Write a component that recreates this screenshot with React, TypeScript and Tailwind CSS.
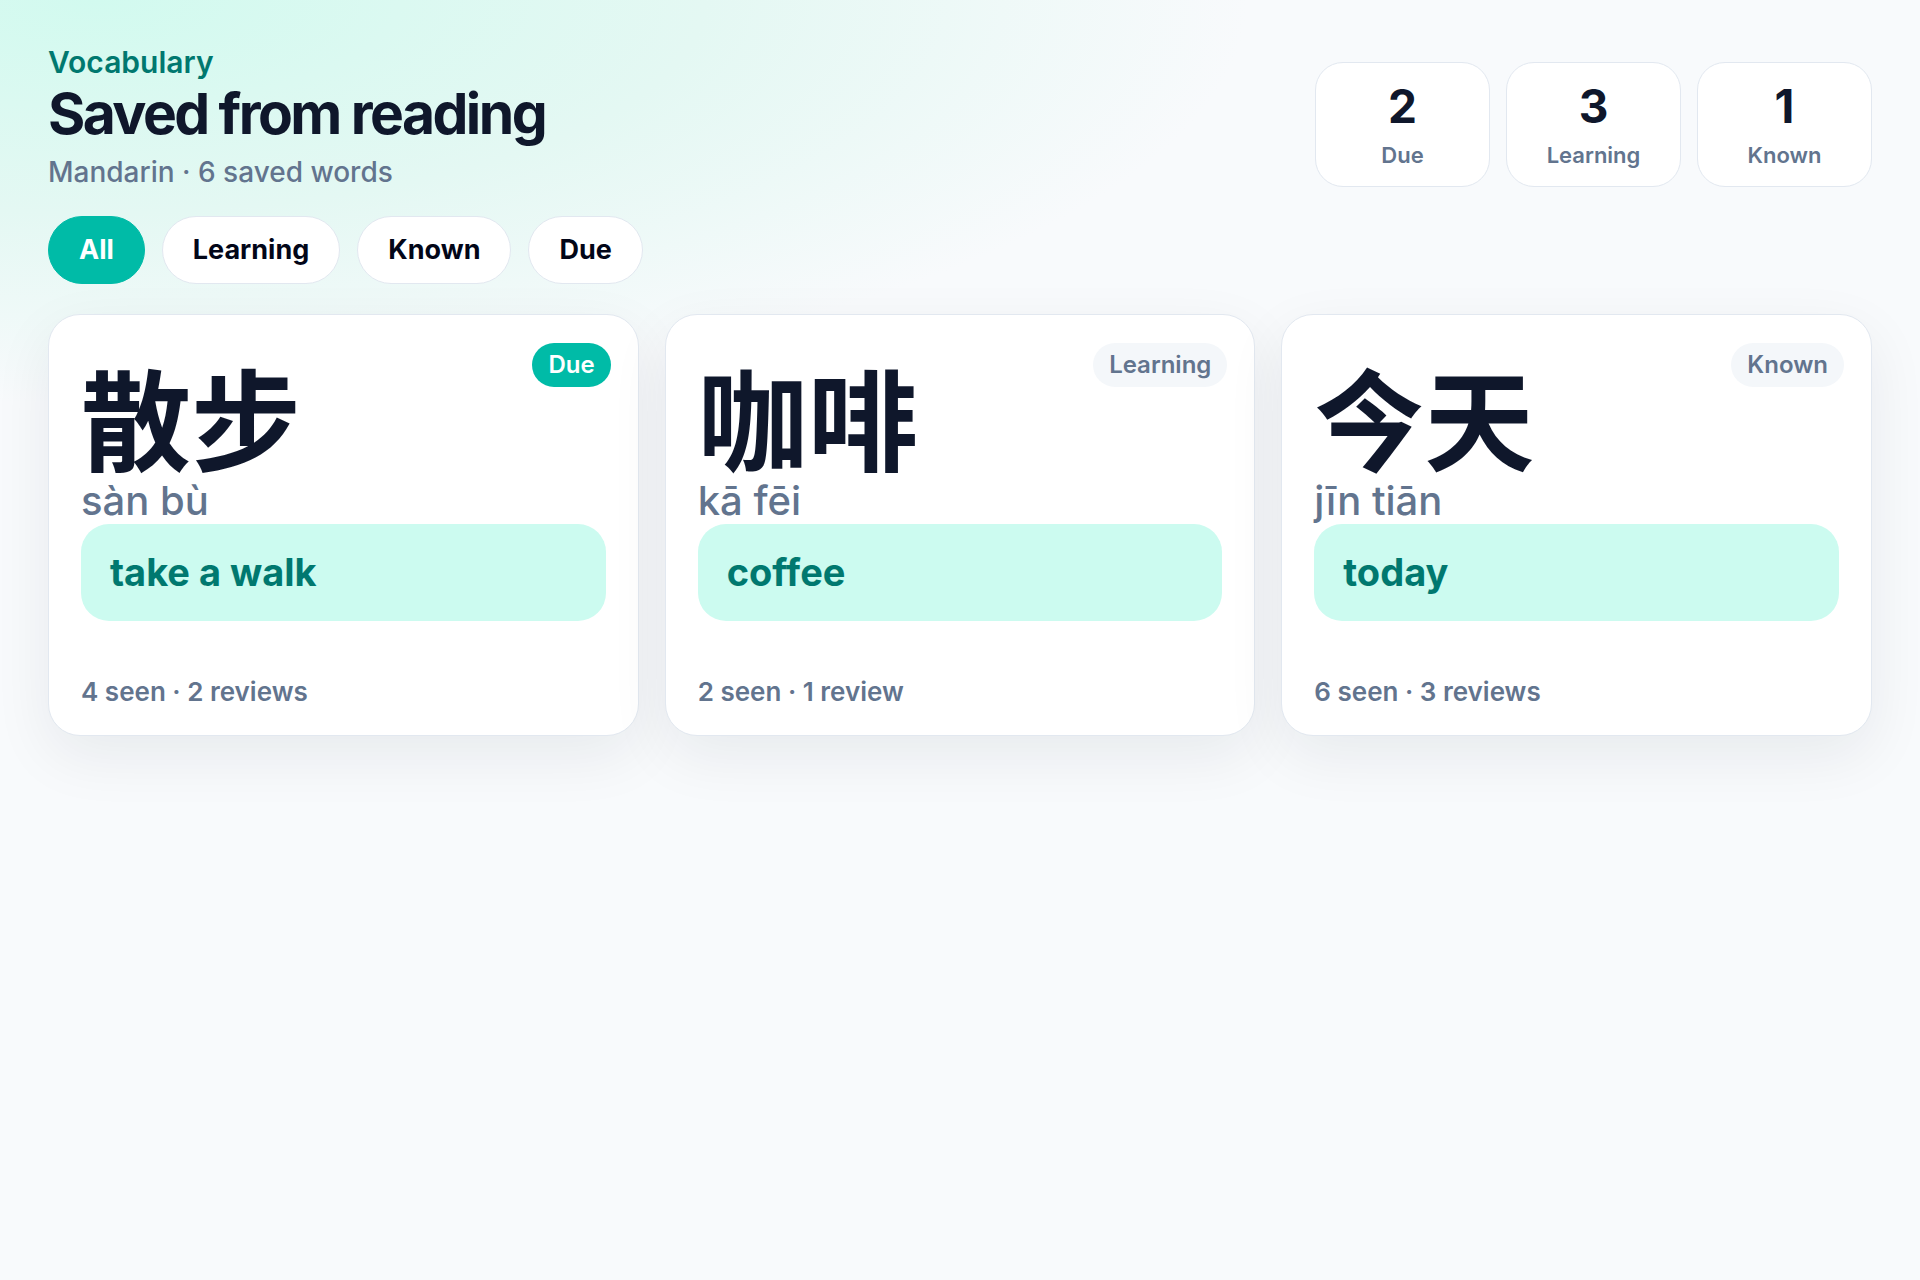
import React from 'react';

type Status = 'Due' | 'Learning' | 'Known';

const stats = [
  { value: 2, label: 'Due' },
  { value: 3, label: 'Learning' },
  { value: 1, label: 'Known' },
];

const filters = ['All', 'Learning', 'Known', 'Due'];

const words: { hanzi: string; pinyin: string; meaning: string; status: Status; meta: string }[] = [
  { hanzi: '散步', pinyin: 'sàn bù', meaning: 'take a walk', status: 'Due', meta: '4 seen · 2 reviews' },
  { hanzi: '咖啡', pinyin: 'kā fēi', meaning: 'coffee', status: 'Learning', meta: '2 seen · 1 review' },
  { hanzi: '今天', pinyin: 'jīn tiān', meaning: 'today', status: 'Known', meta: '6 seen · 3 reviews' },
];

const StatusBadge = ({ status }: { status: Status }) => {
  const tone =
    status === 'Due'
      ? 'bg-teal-500 text-white'
      : 'bg-[#f4f7fa] text-slate-500';
  return (
    <span
      className={`absolute top-[28px] right-[27px] flex h-[44px] items-center rounded-full px-4 text-[24px] font-semibold ${tone}`}
    >
      {status}
    </span>
  );
};

const WordCard = ({ word }: { word: (typeof words)[number] }) => (
  <div className="relative flex flex-col rounded-[32px] border border-slate-200 bg-white px-8 pt-8 pb-[30px] shadow-[0_20px_60px_rgba(15,23,42,0.07)]">
    <StatusBadge status={word.status} />
    <div className="font-['Noto_Sans_CJK_SC',sans-serif] text-[110px] leading-[136px] font-bold text-slate-900">
      {word.hanzi}
    </div>
    <div className="text-[40px] leading-[35px] font-medium text-slate-500">{word.pinyin}</div>
    <div className="mt-[6px] flex h-[97px] items-center rounded-[28px] bg-[#ccfbf0] px-[29px] text-[38px] font-bold text-teal-700">
      {word.meaning}
    </div>
    <div className="mt-[58px] text-[26px] leading-[26px] font-semibold text-slate-500">{word.meta}</div>
  </div>
);

export default function App() {
  return (
    <div className="min-h-screen bg-[#f8fafc] bg-[radial-gradient(ellipse_1600px_560px_at_5%_0%,#d2faef_0%,#e4f8f3_38%,#f8fafc_72%)] px-12 pt-[44px] pb-16 font-['Inter','Noto_Sans_CJK_SC',sans-serif]">
      {/* Header */}
      <div className="flex items-start justify-between">
        <div>
          <div className="text-[30px] leading-[36px] font-semibold text-teal-700">Vocabulary</div>
          <h1 className="mt-[2px] text-[57px] leading-[64px] font-bold tracking-[-0.045em] text-slate-900">
            Saved from reading
          </h1>
          <p className="mt-2.5 text-[28px] leading-[32px] font-medium text-slate-500">Mandarin · 6 saved words</p>
        </div>

        <div className="mt-[18px] flex gap-4">
          {stats.map(s => (
            <div
              key={s.label}
              className="flex h-[125px] w-[175px] flex-col items-center rounded-[28px] border border-slate-200 bg-white pt-[20px]"
            >
              <span className="text-[46px] leading-[46px] font-bold text-slate-900">{s.value}</span>
              <span className="mt-[12px] text-[22px] leading-[28px] font-semibold text-slate-500">{s.label}</span>
            </div>
          ))}
        </div>
      </div>

      {/* Filters */}
      <div className="mt-7 flex gap-[17px]">
        {filters.map((f, i) => (
          <button
            key={f}
            className={
              i === 0
                ? 'h-[68px] rounded-full border border-teal-500 bg-teal-500 px-[30px] text-[27px] font-bold text-white'
                : 'h-[68px] rounded-full border border-slate-200 bg-white px-[30px] text-[27px] font-bold text-slate-950'
            }
          >
            {f}
          </button>
        ))}
      </div>

      {/* Word cards */}
      <div className="mt-[30px] grid grid-cols-3 gap-[26px]">
        {words.map(w => (
          <WordCard key={w.hanzi} word={w} />
        ))}
      </div>
    </div>
  );
}
